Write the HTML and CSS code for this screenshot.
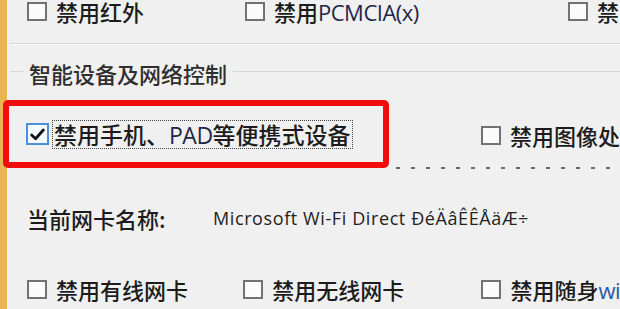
FILE: index.html
```html
<!DOCTYPE html>
<html>
<head>
<meta charset="utf-8">
<link rel="stylesheet" href="styles.css">
</head>
<body>
<div class="page">
  <div class="row r1">
    <label class="item w1"><span class="cb"></span><span class="lbl">禁用红外</span></label>
    <label class="item w2b"><span class="cb"></span><span class="lbl">禁用<span class="lat">PCMCIA(x)</span></span></label>
    <label class="item"><span class="cb"></span><span class="lbl">禁</span></label>
  </div>
  <div class="sep"></div>
  <div class="group-title"><span class="gt">智能设备及网络控制</span></div>
  <div class="mark-row">
    <div class="redbox">
      <label class="item big"><span class="cb checked"><svg viewBox="0 0 16 16" width="17" height="17"><path d="M2.5 8.5 L6.2 12 L13.5 3.8" fill="none" stroke="#111" stroke-width="2.6" stroke-linecap="round" stroke-linejoin="round"/></svg></span><span class="lbl focus">禁用手机、<span class="lat">PAD</span>等便携式设备</span></label>
    </div>
    <div class="right-col">
      <label class="item"><span class="cb"></span><span class="lbl">禁用图像处</span></label>
      <div class="dots"></div>
    </div>
  </div>
  <div class="row nic">
    <span class="nic-label">当前网卡名称:</span>
    <span class="nic-value">Microsoft Wi-Fi Direct ÐéÄâÊÊÅäÆ÷</span>
  </div>
  <div class="row r2">
    <label class="item w1"><span class="cb"></span><span class="lbl">禁用有线网卡</span></label>
    <label class="item w2"><span class="cb"></span><span class="lbl">禁用无线网卡</span></label>
    <label class="item"><span class="cb"></span><span class="lbl">禁用随身<span class="lat blue">wi</span></span></label>
  </div>
</div>
</body>
</html>
```
FILE: styles.css
```css
html, body {
  margin: 0;
  padding: 0;
  background: #f0f0f0;
  overflow: hidden;
}
body {
  width: 620px;
  height: 309px;
  font-family: "Noto Sans CJK SC", "Noto Sans", sans-serif;
  color: #1c1c1c;
  font-weight: 500;
}
.page {
  height: 309px;
  border-left: 7px solid #e8b752;
  display: flex;
  flex-direction: column;
  box-sizing: border-box;
}
.row {
  display: flex;
  align-items: center;
  height: 22px;
  padding-left: 20px;
}
.r1 { margin-top: 0; }
.item {
  display: flex;
  align-items: center;
  font-size: 22px;
  line-height: 22px;
  white-space: nowrap;
}
.item.big { font-size: 23px; line-height: 24px; }
.w1 { width: 218px; }
.w2 { width: 240px; }
.w2b { width: 323px; }
.cb {
  width: 20px;
  height: 19px;
  box-sizing: border-box;
  border: 2px solid #727272;
  background: #fbfbfb;
  margin-right: 9px;
  flex: none;
  display: flex;
  align-items: center;
  justify-content: center;
}
.cb.checked {
  width: 23px;
  height: 22px;
  border-color: #4a90dc;
  background: #f6fafe;
  margin-right: 5px;
}
.lat {
  font-family: "Open Sans", "Noto Sans", sans-serif;
  color: #1f2748;
  letter-spacing: -0.5px;
}
.lat.blue { color: #2c58a8; }
.sep {
  margin-top: 21px;
  margin-left: 3px;
  height: 1px;
  background: #d6d6d6;
  border-bottom: 1px solid #fafafa;
}
.group-title {
  margin-top: 17px;
  height: 22px;
  display: flex;
  align-items: center;
  font-size: 22px;
  line-height: 22px;
  color: #2e2e2e;
}
.group-title::before {
  content: "";
  width: 13px;
  height: 1px;
  margin: 9px 6px 0 3px;
  background: #d6d6d6;
  align-self: flex-start;
}
.group-title::after {
  content: "";
  flex: 1;
  height: 1px;
  margin: 9px 0 0 6px;
  background: #d6d6d6;
  align-self: flex-start;
}
.mark-row {
  margin-top: 16px;
  display: flex;
  height: 68px;
}
.redbox {
  margin-left: -4px;
  width: 390px;
  height: 68px;
  box-sizing: border-box;
  border: 6px solid #f20d0d;
  border-radius: 5px;
  display: flex;
  align-items: center;
  padding-left: 17px;
}
.focus {
  outline: 1px dotted #444;
  outline-offset: 1px;
}
.right-col {
  flex: 1;
  display: flex;
  flex-direction: column;
  justify-content: space-between;
  padding-top: 24px;
}
.right-col .item { padding-left: 92px; }
.dots {
  height: 2px;
  margin-left: 7px;
  margin-bottom: -1px;
  background-image: linear-gradient(to right, #6a6a6a 4px, transparent 4px);
  background-size: 15px 2px;
}
.nic {
  margin-top: 39px;
}
.nic-label {
  width: 186px;
  font-size: 22px;
  line-height: 22px;
  flex: none;
}
.nic-value {
  font-family: "Open Sans", "Noto Sans", sans-serif;
  font-weight: 400;
  font-size: 18px;
  color: #222;
  letter-spacing: 0.6px;
  white-space: nowrap;
}
.r2 { margin-top: 49px; }
```
